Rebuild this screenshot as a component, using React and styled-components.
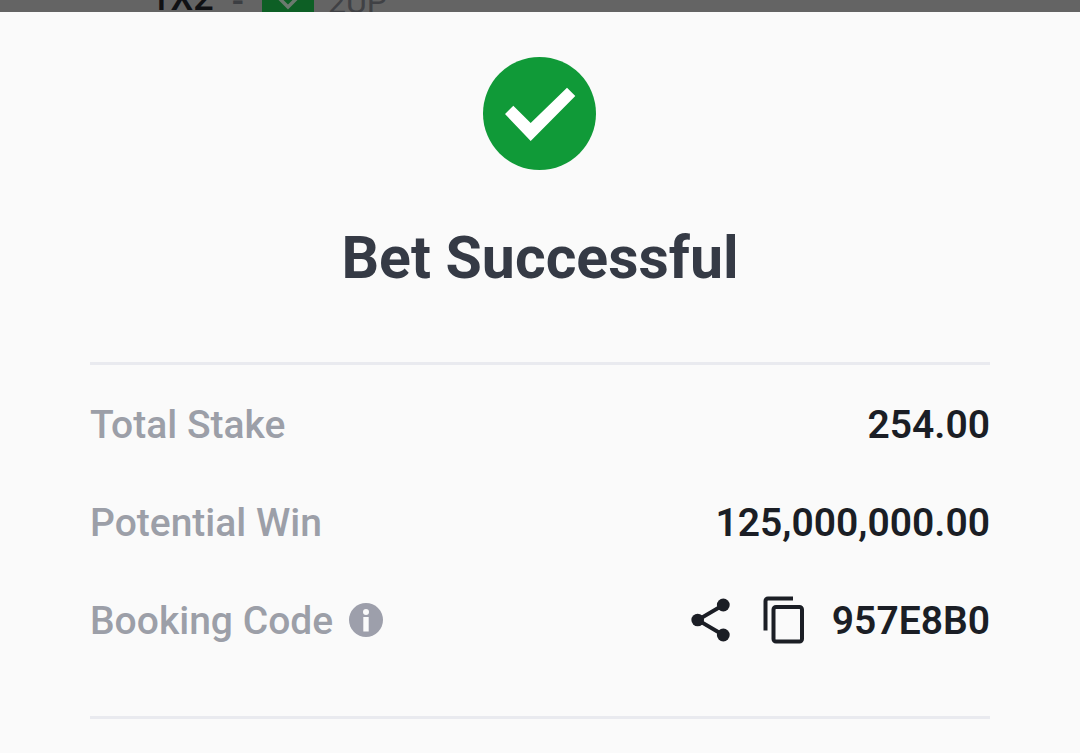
import React from 'react';
import styled, { createGlobalStyle } from 'styled-components';

const details = [
  { label: 'Total Stake', value: '254.00' },
  { label: 'Potential Win', value: '125,000,000.00' },
  { label: 'Booking Code', value: '957E8B0', info: true, actions: true }
]

function SuccessIcon(){
  return <svg width="114" height="113" viewBox="0 0 114 113" aria-hidden="true">
    <circle cx="56.5" cy="56.5" r="56.5" fill="#109a38"/>
    <path d="M22 57l8.3-8.3L47.7 66 84 30.7l8.3 8.3L47.7 84z" fill="#fff"/>
  </svg>
}
function InfoIcon(){
  return <svg width="34" height="36" viewBox="0 0 34 36" aria-hidden="true">
    <circle cx="17" cy="17" r="17" fill="#9d9fab"/>
    <circle cx="17" cy="9" r="3" fill="#fafafa"/>
    <path d="M14.3 14h5.4v14.5h-5.4z" fill="#fafafa"/>
  </svg>
}
function ShareIcon(){
  return <svg width="40" height="48" viewBox="0 0 40 48" aria-hidden="true">
    <path d="M32.3 8L6.7 23l25.6 15" fill="none" stroke="#1b1e25" strokeWidth="3.8"/>
    <circle cx="6.7" cy="23" r="6.3" fill="#1b1e25"/>
    <circle cx="32.3" cy="8" r="6.4" fill="#1b1e25"/>
    <circle cx="32.3" cy="38" r="6.4" fill="#1b1e25"/>
  </svg>
}
function CopyIcon(){
  return <svg width="42" height="50" viewBox="0 0 42 50" fill="none" stroke="#1b1e25" strokeWidth="4" aria-hidden="true">
    <path d="M2.5 34.5V5a2.5 2.5 0 0 1 2.5-2.5h25"/>
    <rect x="10.5" y="11" width="28.5" height="34.5" rx="2.5"/>
  </svg>
}
function BadgeTick(){
  return <svg width="24" height="24" viewBox="0 0 24 24" aria-hidden="true">
    <path d="M3 10l9 9 9-9" fill="none" stroke="#6b7a6f" strokeWidth="3.5"/>
  </svg>
}

function generateRow(item){
  return <Row key={item.label}>
    <Term>
      {item.label}
      {item.info && <IconButton type="button" aria-label="About booking code"><InfoIcon/></IconButton>}
    </Term>
    <Value>
      {item.actions && <Actions>
        <IconButton type="button" aria-label="Share"><ShareIcon/></IconButton>
        <IconButton type="button" aria-label="Copy"><CopyIcon/></IconButton>
      </Actions>}
      {item.value}
    </Value>
  </Row>
}

function App(){
  return (
    <>
      <GlobalStyle/>
      <Backdrop>
        <Market>
          <Outcome>1X2</Outcome>
          <Dash>-</Dash>
          <Badge><BadgeTick/></Badge>
          <Promo>2UP</Promo>
        </Market>
      </Backdrop>
      <Sheet>
        <SuccessIcon/>
        <Title>Bet Successful</Title>
        <Details>{details.map(generateRow)}</Details>
      </Sheet>
    </>
  );
}

const GlobalStyle = createGlobalStyle`
  * {
    box-sizing: border-box;
  }
  body {
    margin: 0;
    background: #fafafa;
    font-family: Roboto, 'Liberation Sans', sans-serif;
  }
`
// dimmed page that stays visible above the sheet
const Backdrop = styled.div`
  display: flex;
  align-items: flex-end;
  height: 12px;
  padding: 0 150px;
  overflow: hidden;
  background: #646464;
`
const Market = styled.div`
  display: flex;
  align-items: flex-end;
  line-height: 28px;
  font-size: 36px;
`
const Outcome = styled.span`
  font-weight: 500;
  color: #101114;
`
const Dash = styled.span`
  margin: 0 18px;
  font-weight: 500;
  line-height: 20px;
  color: #3c3e42;
`
const Badge = styled.span`
  display: flex;
  align-items: flex-end;
  justify-content: center;
  width: 52px;
  height: 28px;
  margin-right: 14px;
  background: #0d5f25;
`
const Promo = styled.span`
  font-size: 32px;
  line-height: 20px;
  color: #404145;
`
const Sheet = styled.main`
  display: flex;
  flex-direction: column;
  align-items: center;
  padding: 45px 90px 34px;
  background: #fafafa;
`
const Title = styled.h1`
  margin: 52px 0 68px;
  font-size: 59px;
  font-weight: 700;
  line-height: 72px;
  color: #353a45;
`
const Details = styled.dl`
  align-self: stretch;
  margin: 0;
  padding: 11px 0 46px;
  border-top: 3px solid #e9eaef;
  border-bottom: 3px solid #e9eaef;
`
const Row = styled.div`
  display: flex;
  align-items: center;
  justify-content: space-between;
  height: 98px;
  font-size: 39px;
`
const Term = styled.dt`
  display: flex;
  align-items: center;
  gap: 16px;
  font-weight: 500;
  color: #9c9fa8;
`
const Value = styled.dd`
  display: flex;
  align-items: center;
  gap: 27px;
  margin: 0;
  font-weight: 600;
  color: #1b1e25;
`
const Actions = styled.span`
  display: flex;
  align-items: center;
  gap: 32px;
`
const IconButton = styled.button`
  display: flex;
  padding: 0;
  border: none;
  background: none;
  cursor: pointer;
`
export default App;
